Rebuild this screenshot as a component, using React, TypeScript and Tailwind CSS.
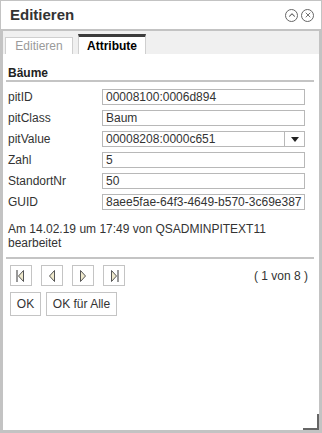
import { ChevronUp, X } from "lucide-react";

const rows = [
  { label: "pitID", value: "00008100:0006d894" },
  { label: "pitClass", value: "Baum" },
  { label: "pitValue", value: "00008208:0000c651", select: true },
  { label: "Zahl", value: "5" },
  { label: "StandortNr", value: "50" },
  { label: "GUID", value: "8aee5fae-64f3-4649-b570-3c69e387" },
];

// small triangle glyphs for the record navigation
const NavIcon = ({ dir, bar }: { dir: "left" | "right"; bar?: boolean }) => {
  const tri =
    dir === "left" ? "M9.5 1.5 L4.5 7 L9.5 12.5 Z" : "M4.5 1.5 L9.5 7 L4.5 12.5 Z";
  const barX = dir === "left" ? 3 : 11;
  return (
    <svg width="14" height="14" viewBox="0 0 14 14">
      <path d={tri} fill="#efe9cc" stroke="#555" strokeWidth="1" />
      {bar && <line x1={barX} y1="1" x2={barX} y2="13" stroke="#555" strokeWidth="1.2" />}
    </svg>
  );
};

const NavButton = ({ children }: { children: React.ReactNode }) => (
  <button className="w-[22px] h-[21px] border border-[#c4c4c4] bg-white flex items-center justify-center">
    {children}
  </button>
);

export default function App() {
  return (
    <div
      className="relative w-[322px] h-[433px] flex flex-col bg-[#c3c3c3] pt-[1px] px-[1px] pb-[3px] text-[#333]"
      style={{ fontFamily: '"Liberation Sans", Arial, sans-serif' }}
    >
      {/* Title bar */}
      <div className="h-[28px] bg-white flex items-center justify-between pl-[9px] pr-[7px]">
        <span className="text-[15px] font-bold text-[#333]">Editieren</span>
        <div className="flex items-center gap-[3px]">
          <span className="w-[13px] h-[13px] rounded-full border border-[#666] flex items-center justify-center">
            <ChevronUp className="w-[10px] h-[10px] text-[#555]" strokeWidth={2.5} />
          </span>
          <span className="w-[13px] h-[13px] rounded-full border border-[#666] flex items-center justify-center">
            <X className="w-[8px] h-[8px] text-[#555]" strokeWidth={2.5} />
          </span>
        </div>
      </div>

      {/* Body */}
      <div className="mt-[2px] mx-[2px] flex-1 bg-white flex flex-col">
        {/* Tabs */}
        <div className="h-[23px] bg-[#f0f0f0] flex items-end pl-[2px] gap-[5px]">
          <div className="w-[68px] h-[17px] bg-white border border-b-0 border-[#cfcfcf] flex items-center justify-center text-[12px] text-[#9a9a9a]">
            Editieren
          </div>
          <div className="w-[68px] h-[20px] bg-white border-t-[3px] border-t-[#3c3c3c] border-x border-x-[#cfcfcf] flex items-center justify-center text-[12px] font-bold text-black">
            Attribute
          </div>
        </div>

        {/* Content */}
        <div className="px-[5px] pt-[12px] flex flex-col">
          <div className="text-[12px] font-bold leading-[14px] text-[#222]">Bäume</div>
          <div className="h-[2px] bg-[#c4c4c4] mb-[7px] -ml-[2px]" />

          <div className="flex flex-col gap-[5px]">
            {rows.map((r) => (
              <div key={r.label} className="flex items-center h-[16px]">
                <span className="w-[94px] text-[12px] text-[#333]">{r.label}</span>
                <div className="w-[203px] h-[16px] border border-[#b8b8b8] flex items-center overflow-hidden">
                  <span className="flex-1 pl-[3px] text-[12px] text-[#333] whitespace-nowrap overflow-hidden">
                    {r.value}
                  </span>
                  {r.select && (
                    <span className="w-[20px] h-full border-l border-[#b8b8b8] flex items-center justify-center">
                      <svg width="8" height="5" viewBox="0 0 8 5">
                        <path d="M0 0 H8 L4 5 Z" fill="#222" />
                      </svg>
                    </span>
                  )}
                </div>
              </div>
            ))}
          </div>

          <p className="mt-[12px] text-[12px] leading-[14px] text-[#333]">
            Am 14.02.19 um 17:49 von QSADMINPITEXT11
            <br />
            bearbeitet
          </p>

          <div className="mt-[7px] h-[2px] bg-[#c4c4c4] -ml-[2px]" />

          <div className="mt-[6px] flex items-center pl-[2px] pr-[6px]">
            <div className="flex gap-[9px]">
              <NavButton>
                <NavIcon dir="left" bar />
              </NavButton>
              <NavButton>
                <NavIcon dir="left" />
              </NavButton>
              <NavButton>
                <NavIcon dir="right" />
              </NavButton>
              <NavButton>
                <NavIcon dir="right" bar />
              </NavButton>
            </div>
            <span className="ml-auto text-[12px] text-[#333]">( 1 von 8 )</span>
          </div>

          <div className="mt-[6px] flex gap-[5px] pl-[2px]">
            <button className="w-[31px] h-[24px] border border-[#c4c4c4] bg-white text-[12px] text-[#333]">
              OK
            </button>
            <button className="w-[71px] h-[24px] border border-[#c4c4c4] bg-white text-[12px] text-[#333]">
              OK für Alle
            </button>
          </div>
        </div>
      </div>

      {/* resize grip */}
      <div className="absolute right-[3px] bottom-[3px] w-[16px] h-[16px] border-r-2 border-b-2 border-[#666]" />
    </div>
  );
}
